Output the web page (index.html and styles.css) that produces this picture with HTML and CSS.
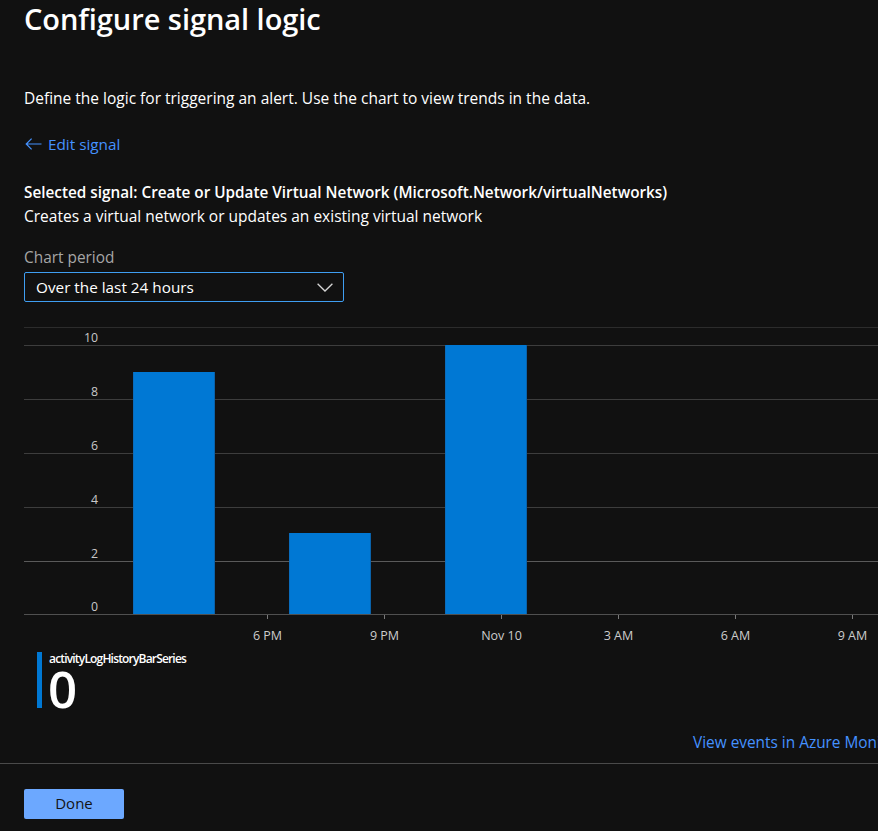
FILE: index.html
```html
<!DOCTYPE html>
<html lang="en">
<head>
<meta charset="utf-8">
<title>Configure signal logic</title>
<link rel="stylesheet" href="styles.css">
</head>
<body>
<div class="page">
  <main class="content">
    <h1 class="title">Configure signal logic</h1>
    <p class="desc">Define the logic for triggering an alert. Use the chart to view trends in the data.</p>
    <a class="back-link" href="#">
      <svg class="back-arrow" width="17" height="12" viewBox="0 0 17 12" aria-hidden="true"><path d="M16.5 6H1.2M6.6 0.6L1.2 6l5.4 5.4" fill="none" stroke="currentColor" stroke-width="1.2"/></svg>
      <span>Edit signal</span>
    </a>
    <p class="signal-name">Selected signal: Create or Update Virtual Network (Microsoft.Network/virtualNetworks)</p>
    <p class="signal-desc">Creates a virtual network or updates an existing virtual network</p>
    <label class="field-label">Chart period</label>
    <div class="dropdown">
      <span>Over the last 24 hours</span>
      <svg class="chevron" width="16" height="9" viewBox="0 0 16 9" aria-hidden="true"><path d="M0.6 0.8L8 8l7.4-7.2" fill="none" stroke="currentColor" stroke-width="1.3"/></svg>
    </div>

    <div class="chart">
      <div class="plot">
        <div class="rows">
          <div class="row row-top"><span class="ylabel">10</span></div>
          <div class="row"><span class="ylabel">8</span></div>
          <div class="row"><span class="ylabel">6</span></div>
          <div class="row"><span class="ylabel">4</span></div>
          <div class="row row-mark"><span class="ylabel">2</span></div>
          <div class="row row-axis"><span class="ylabel">0</span></div>
        </div>
        <div class="bars">
          <div class="bar" style="height:242px"></div>
          <div class="bar" style="height:81px"></div>
          <div class="bar" style="height:269px"></div>
        </div>
      </div>
      <div class="xaxis">
        <div class="xtick"><i></i><span>6 PM</span></div>
        <div class="xtick"><i></i><span>9 PM</span></div>
        <div class="xtick"><i></i><span>Nov 10</span></div>
        <div class="xtick"><i></i><span>3 AM</span></div>
        <div class="xtick"><i></i><span>6 AM</span></div>
        <div class="xtick"><i></i><span>9 AM</span></div>
      </div>
    </div>

    <div class="legend">
      <div class="legend-swatch"></div>
      <div class="legend-text">
        <div class="legend-name">activityLogHistoryBarSeries</div>
        <div class="legend-value">0</div>
      </div>
    </div>

    <div class="link-row"><a class="events-link" href="#">View events in Azure Monitor</a></div>
  </main>
  <footer class="footer">
    <button class="btn-primary" type="button">Done</button>
  </footer>
</div>
</body>
</html>
```

FILE: styles.css
```css
html, body {
  margin: 0;
  padding: 0;
  background: #111111;
  overflow: hidden;
}
body {
  font-family: "Open Sans", "Noto Sans", sans-serif;
  color: #ffffff;
  font-size: 15.5px;
  line-height: 20px;
}
.page {
  width: 1000px;
}
.content {
  padding-left: 24px;
  display: flex;
  flex-direction: column;
  align-items: flex-start;
}
.title {
  margin: 1px 0 0;
  font-size: 29px;
  line-height: 36px;
  font-weight: 600;
  letter-spacing: -0.05px;
}
.desc {
  margin: 51px 0 0;
}
.back-link {
  margin-top: 26px;
  display: flex;
  align-items: center;
  gap: 6px;
  color: #4592ff;
  text-decoration: none;
  font-size: 15.3px;
}
.back-arrow {
  display: block;
  margin-left: 1px;
}
.signal-name {
  margin: 28px 0 0;
  font-weight: 600;
  font-size: 15.3px;
}
.signal-desc {
  margin: 4px 0 0;
}
.field-label {
  margin-top: 22px;
  color: #a6a6a6;
  font-size: 15.4px;
}
.dropdown {
  margin-top: 4px;
  box-sizing: border-box;
  width: 320px;
  height: 30px;
  border: 1px solid #3f9ef2;
  border-radius: 2px;
  display: flex;
  align-items: center;
  justify-content: space-between;
  padding: 0 10px 0 11px;
  font-size: 15.3px;
}
.chevron {
  display: block;
  color: #d6d6d6;
}

/* chart */
.chart {
  margin-top: 25px;
  width: 976px;
  border-top: 1px solid #2c2c2c;
}
.plot {
  display: grid;
}
.rows, .bars {
  grid-area: 1 / 1;
}
.row {
  box-sizing: border-box;
  height: 54px;
  border-bottom: 1px solid #3d3d3d;
  display: flex;
  align-items: flex-end;
}
.row-top {
  height: 18px;
}
.row-mark {
  border-bottom-color: #5a5a5a;
}
.row-axis {
  height: 53px;
  border-bottom-color: #505050;
}
.ylabel {
  width: 74px;
  text-align: right;
  font-size: 12.3px;
  line-height: 14px;
  color: #c8c8c8;
}
.bars {
  display: flex;
  align-items: flex-end;
  gap: 74px;
  padding: 0 0 1px 109px;
}
.bar {
  width: 82px;
  background: #0078d4;
  box-shadow: inset 1px 0 0 #0a6cbc, inset -1px 0 0 #0a62aa;
}
.xaxis {
  display: flex;
  padding-left: 185px;
}
.xtick {
  width: 117px;
  display: flex;
  flex-direction: column;
  align-items: center;
}
.xtick i {
  display: block;
  width: 1px;
  height: 4px;
  background: #7a7a7a;
}
.xtick span {
  margin-top: 9px;
  font-size: 12.5px;
  line-height: 16px;
  color: #cccccc;
}

/* legend */
.legend {
  margin: 7px 0 0 13px;
  display: flex;
  align-items: flex-start;
  gap: 7px;
}
.legend-swatch {
  margin-top: 1px;
  width: 5px;
  height: 56px;
  background: #0078d4;
}
.legend-name {
  font-size: 12px;
  line-height: 13px;
  font-weight: 600;
  letter-spacing: -0.82px;
  padding-top: 1px;
}
.legend-value {
  margin: 0 0 0 -1px;
  font-size: 51px;
  line-height: 46px;
  font-weight: 600;
}
.link-row {
  display: flex;
  margin: 22px 0 0 669px;
}
.events-link {
  display: block;
  color: #4592ff;
  text-decoration: none;
  font-size: 15.4px;
  line-height: 20px;
  white-space: nowrap;
}

/* footer */
.footer {
  margin-top: 10px;
  border-top: 1px solid #4a4a4a;
  padding: 25px 24px;
}
.btn-primary {
  box-sizing: border-box;
  width: 100px;
  height: 30px;
  border: none;
  border-radius: 2px;
  background: #6ca8ff;
  color: #141414;
  font-family: "Open Sans", "Noto Sans", sans-serif;
  font-size: 15px;
  line-height: 20px;
  padding: 0 0 2px;
  cursor: pointer;
}
```
